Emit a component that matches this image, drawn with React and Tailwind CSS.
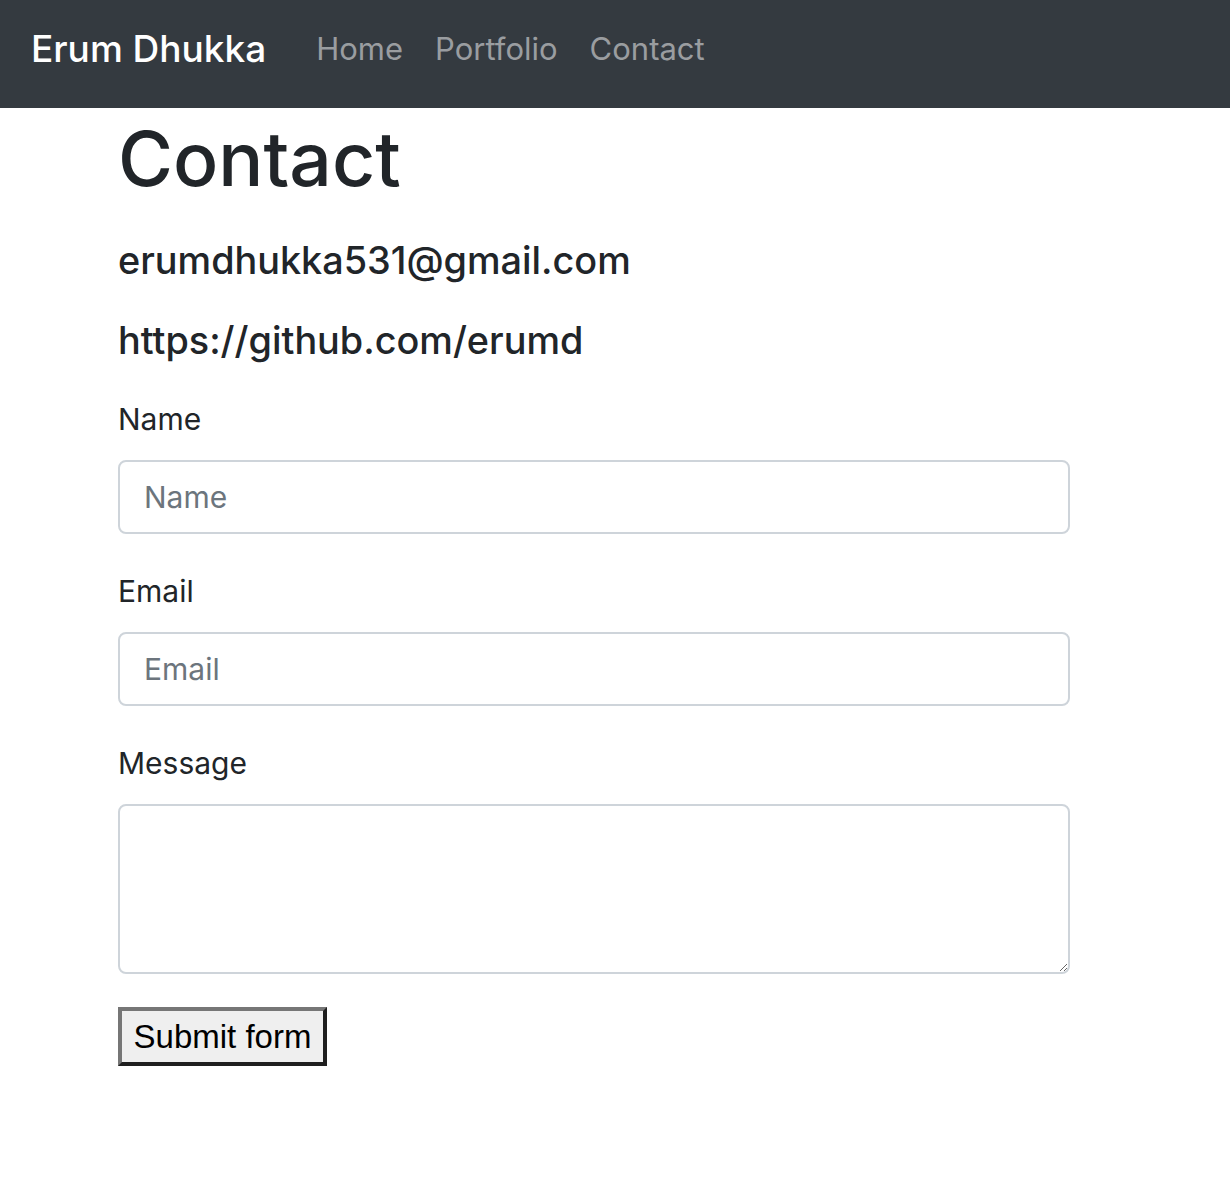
import React, { useState } from "react";

const font = { fontFamily: "Inter, 'Noto Sans', sans-serif" };

function Field({ label, placeholder, textarea = false }) {
  return (
    <div className="mt-[35px] first:mt-[34px]">
      <label className="mb-[18px] block text-[30px] leading-[45px] text-[#212529]">{label}</label>
      {textarea ? (
        <textarea className="block h-[170px] w-[952px] rounded-[8px] border-2 border-[#ced4da] bg-white px-[23px] py-[12px] text-[30px] text-[#495057] outline-none" />
      ) : (
        <input
          placeholder={placeholder}
          className="block h-[74px] w-[952px] rounded-[8px] border-2 border-[#ced4da] bg-white px-[24px] text-[30px] text-[#495057] outline-none placeholder:text-[#6c757d]"
        />
      )}
    </div>
  );
}

export default function App() {
  const [active] = useState("Contact");
  const links = ["Home", "Portfolio", "Contact"];

  return (
    <div className="min-h-screen bg-white" style={font}>
      <nav className="flex h-[108px] items-center bg-[#343a40] pb-[12px] pl-[31px]">
        <span className="mr-[50px] text-[37px] font-medium leading-none text-white">Erum Dhukka</span>
        <div className="flex gap-[32px]">
          {links.map((link) => (
            <a key={link} href="#" className="text-[31px] leading-none text-[#9a9da0]">
              {link}
            </a>
          ))}
        </div>
      </nav>

      <main className="pl-[118px] pt-[5px] text-[#212529]">
        <h1 className="text-[75px] font-medium leading-[91px]">{active}</h1>
        <h5 className="mt-[33px] text-[37.8px] font-medium leading-[46px]">erumdhukka531@gmail.com</h5>
        <h5 className="mt-[34px] text-[37.8px] font-medium leading-[46px]">https://github.com/erumd</h5>

        <form onSubmit={(event) => event.preventDefault()}>
          <Field label="Name" placeholder="Name" />
          <Field label="Email" placeholder="Email" />
          <Field label="Message" textarea />

          <button
            type="submit"
            className="mt-[33px] h-[59px] w-[209px] border-4 border-b-[#1f1f1f] border-l-[#767676] border-r-[#1f1f1f] border-t-[#767676] bg-[#efefef] text-[33px] text-black"
            style={{ fontFamily: "'Liberation Sans', Arial, sans-serif" }}
          >
            Submit form
          </button>
        </form>
      </main>
    </div>
  );
}
